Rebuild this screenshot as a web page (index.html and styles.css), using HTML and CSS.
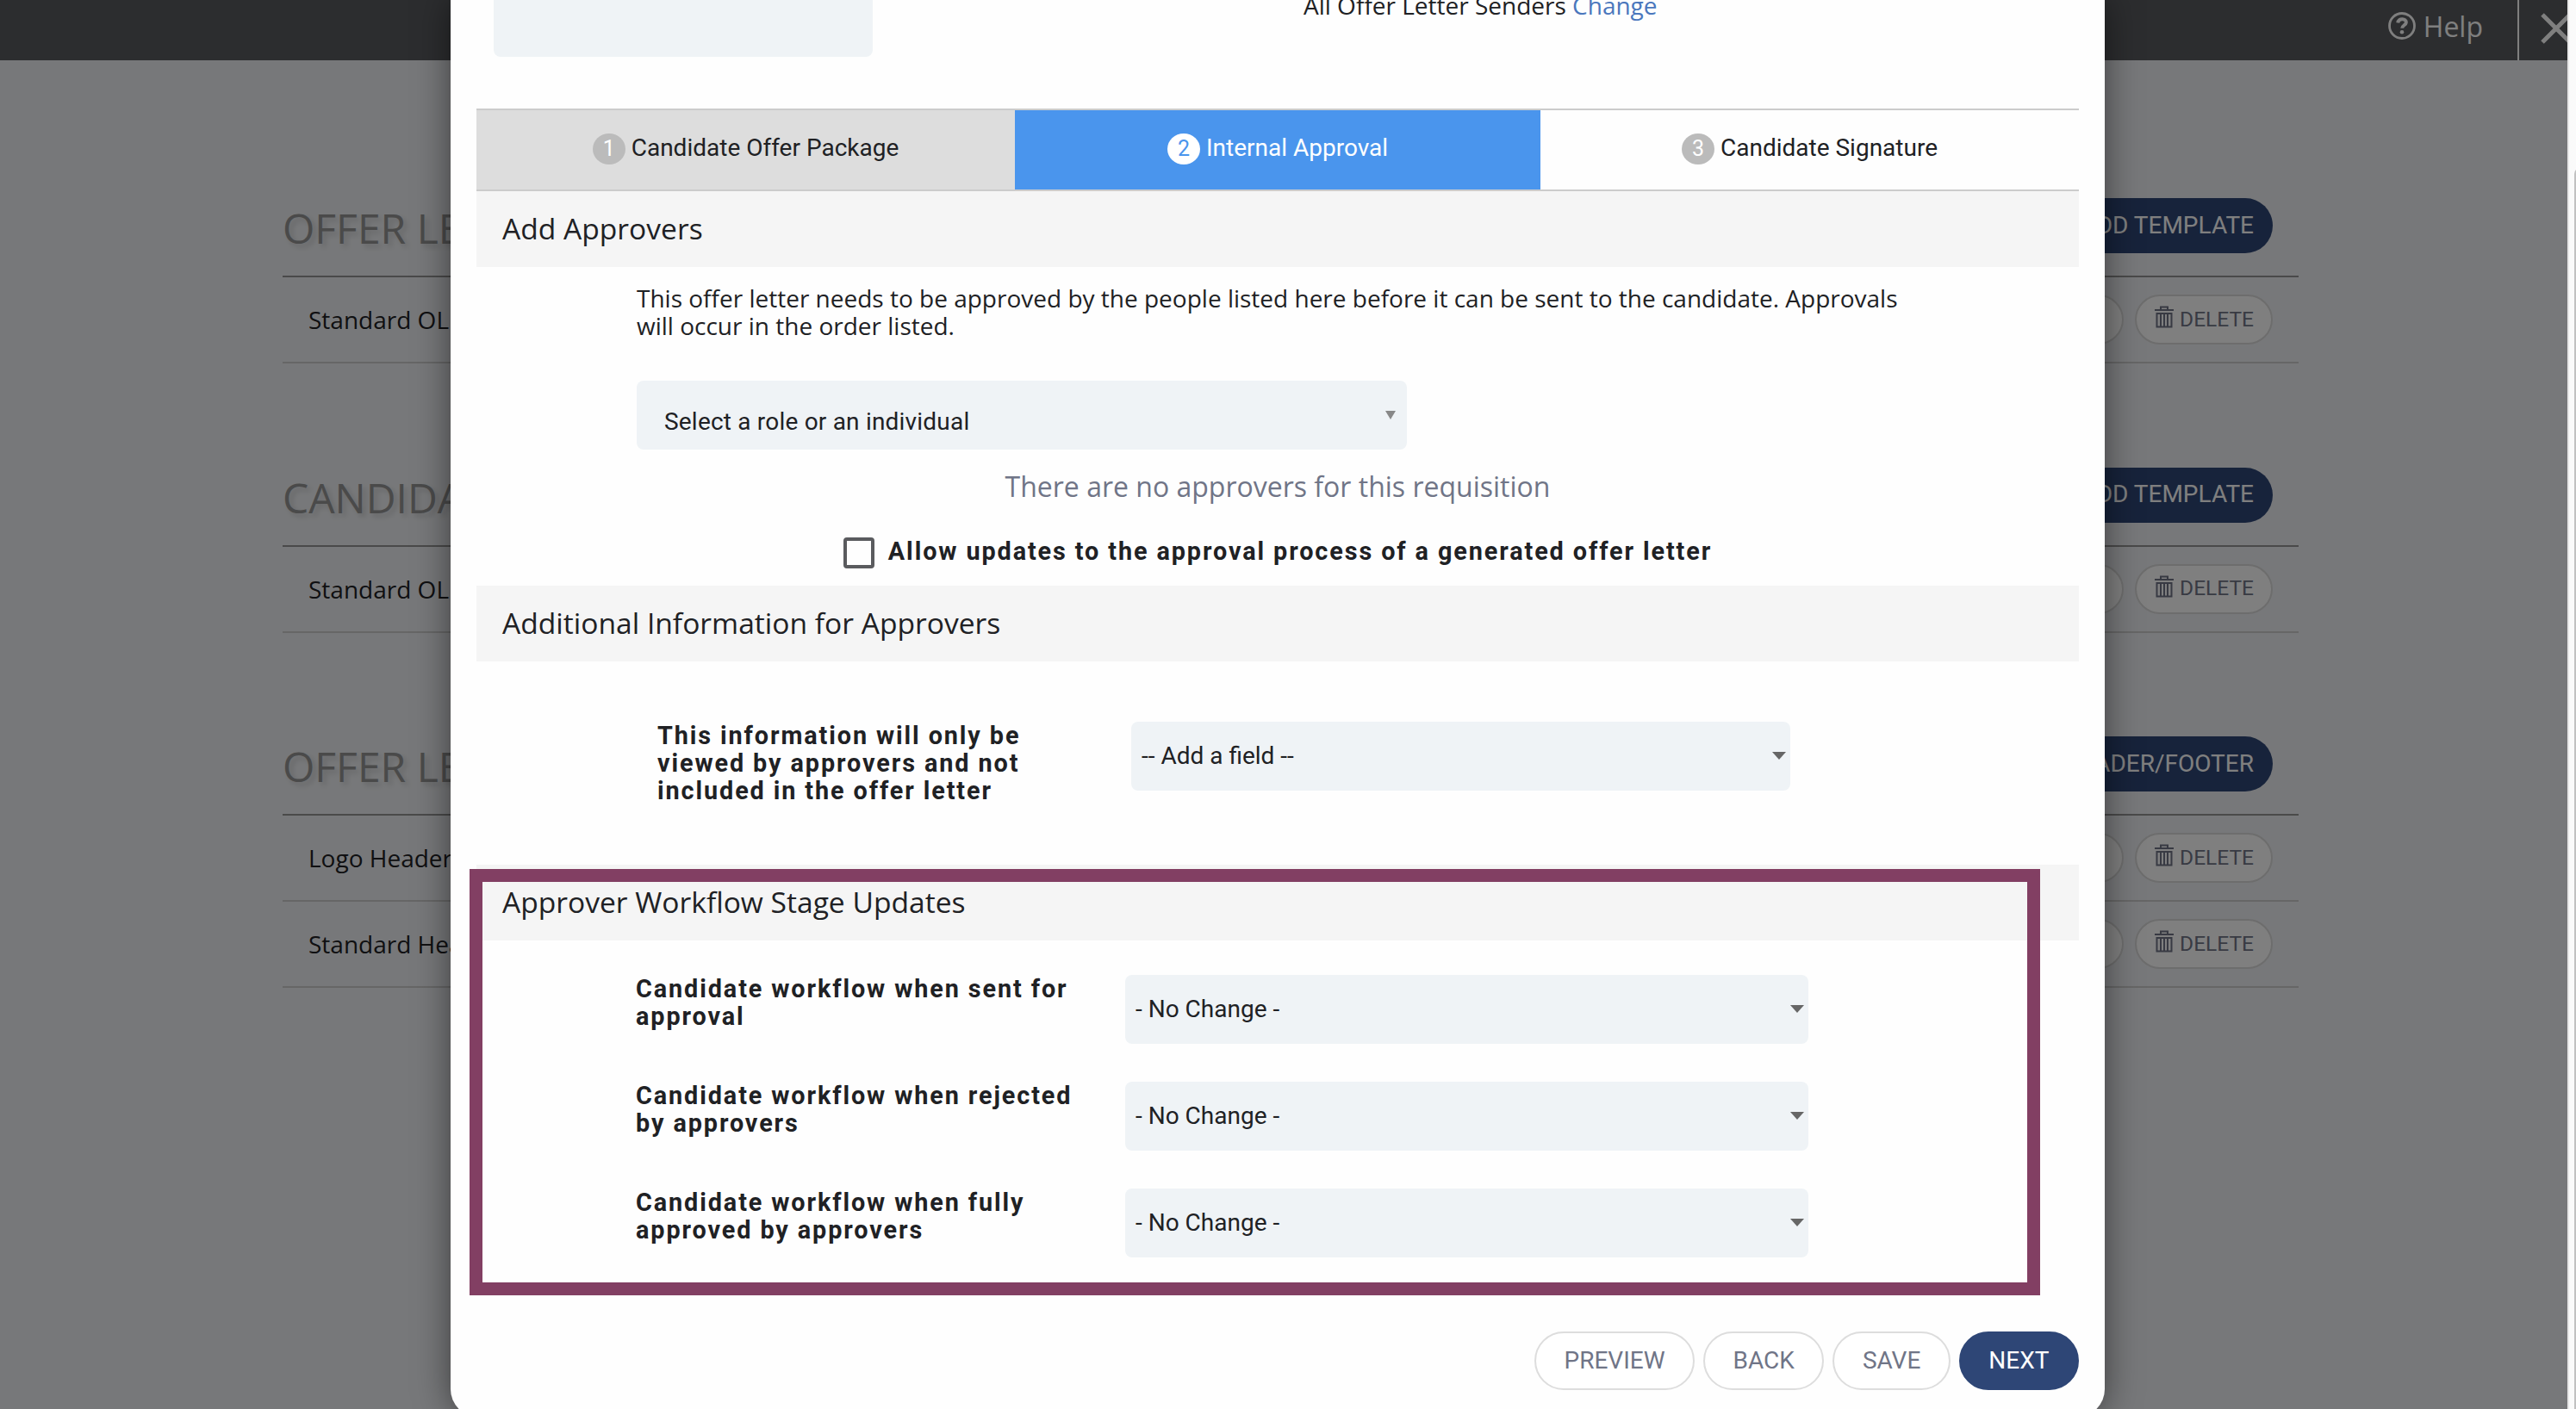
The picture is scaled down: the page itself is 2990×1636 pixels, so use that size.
FILE: index.html
```
<!DOCTYPE html>
<html lang="en">
<head>
    <meta charset="UTF-8">
    <meta name="viewport" content="width=device-width, initial-scale=1.0">
    <title>Offer Letter Templates</title>
    <link rel="stylesheet" href="styles.css">
</head>
<body>
    <svg class="sprite">
        <symbol id="icon-trash" viewBox="0 0 22 26">
            <path d="M0 5h22M7 4.500V1.500h8v3M2.500 9h17v15.500h-17zM7 9v15M11 9v15M15 9v15" fill="none" stroke="currentColor" stroke-width="2"/>
        </symbol>
    </svg>
    <div class="screen">
        <div class="page">
            <header class="topbar">
                <div class="help">
                    <svg class="help-icon" viewBox="0 0 32 32" fill="none" stroke="currentColor">
                        <circle cx="16" cy="16" r="14.500" stroke-width="2.800"/>
                        <path d="M11.300 12.500c.5-6 10-5.500 9.500-.3-.3 3-4.600 3.200-4.600 6.600" stroke-width="4"/>
                        <circle cx="16" cy="23.300" r="2.300" fill="currentColor" stroke="none"/>
                    </svg>
                    <span>Help</span>
                </div>
                <div class="close">
                    <svg class="close-icon" viewBox="0 0 36 36"><path d="M2 2l32 32M34 2L2 34" stroke="currentColor" stroke-width="5"/></svg>
                </div>
            </header>
            <main class="content">
                <section class="group">
                    <div class="group-head">
                        <h1>OFFER LETTERS</h1>
                        <button class="add">ADD TEMPLATE</button>
                    </div>
                    <div class="item">
                        <span>Standard OL</span>
                        <button class="small">EDIT</button>
                        <button class="small"><svg class="trash"><use href="#icon-trash"/></svg>DELETE</button>
                    </div>
                </section>
                <section class="group">
                    <div class="group-head">
                        <h1>CANDIDATE</h1>
                        <button class="add">ADD TEMPLATE</button>
                    </div>
                    <div class="item">
                        <span>Standard OL</span>
                        <button class="small">EDIT</button>
                        <button class="small"><svg class="trash"><use href="#icon-trash"/></svg>DELETE</button>
                    </div>
                </section>
                <section class="group">
                    <div class="group-head">
                        <h1>OFFER LETTERS</h1>
                        <button class="add">ADD HEADER/FOOTER</button>
                    </div>
                    <div class="item">
                        <span>Logo Header</span>
                        <button class="small">EDIT</button>
                        <button class="small"><svg class="trash"><use href="#icon-trash"/></svg>DELETE</button>
                    </div>
                    <div class="item">
                        <span>Standard Header</span>
                        <button class="small">EDIT</button>
                        <button class="small"><svg class="trash"><use href="#icon-trash"/></svg>DELETE</button>
                    </div>
                </section>
            </main>
            <div class="backdrop"></div>
            <div class="modal">
                <div class="modal-top">
                    <div class="top-field"></div>
                    <p class="senders">All Offer Letter Senders <a>Change</a></p>
                </div>
                <nav class="tabs">
                    <div class="tab done"><span class="num">1</span>Candidate Offer Package</div>
                    <div class="tab active"><span class="num">2</span>Internal Approval</div>
                    <div class="tab"><span class="num">3</span>Candidate Signature</div>
                </nav>

                <h2 class="band">Add Approvers</h2>
                <div class="approvers">
                    <p class="intro">This offer letter needs to be approved by the people listed here before it can be sent to the candidate. Approvals will occur in the order listed.</p>
                    <div class="select role">Select a role or an individual<i class="arrow"></i></div>
                </div>
                <p class="empty">There are no approvers for this requisition</p>
                <label class="allow"><span class="box"></span>Allow updates to the approval process of a generated offer letter</label>

                <h2 class="band">Additional Information for Approvers</h2>
                <div class="row info">
                    <span class="label">This information will only be<br>viewed by approvers and not<br>included in the offer letter</span>
                    <div class="select">-- Add a field --<i class="arrow"></i></div>
                </div>

                <h2 class="band">Approver Workflow Stage Updates</h2>
                <div class="stages">
                    <div class="row">
                        <span class="label">Candidate workflow when sent for<br>approval</span>
                        <div class="select">- No Change -<i class="arrow"></i></div>
                    </div>
                    <div class="row">
                        <span class="label">Candidate workflow when rejected<br>by approvers</span>
                        <div class="select">- No Change -<i class="arrow"></i></div>
                    </div>
                    <div class="row">
                        <span class="label">Candidate workflow when fully<br>approved by approvers</span>
                        <div class="select">- No Change -<i class="arrow"></i></div>
                    </div>
                </div>

                <footer class="actions">
                    <button class="btn">PREVIEW</button>
                    <button class="btn">BACK</button>
                    <button class="btn">SAVE</button>
                    <button class="btn primary">NEXT</button>
                </footer>
                <div class="highlight"></div>
            </div>
        </div>
        <div class="scrollbar"><div class="thumb"></div></div>
    </div>
</body>
</html>
```
FILE: styles.css
```
* {
    box-sizing: border-box;
}
body {
    margin: 0;
    font-family: "Open Sans", sans-serif;
    font-size: 28px;
    color: #202124;
    overflow: hidden;
}
h1, h2, p {
    margin: 0;
    font-weight: 400;
}
button {
    font-family: Roboto, sans-serif;
    white-space: nowrap;
}
.sprite {
    display: none;
}
.screen {
    display: flex;
    height: 1636px;
}
.page {
    position: relative;
    width: 2980px;
    height: 1636px;
    background: #eff1f4;
    overflow: hidden;
}
.scrollbar {
    width: 10px;
    padding: 195px 0 0 6px;
    background: #fafafa;
    border-left: 2px solid #e7e7e7;
    overflow: hidden;
}
.thumb {
    width: 14px;
    height: 1500px;
    border-radius: 7px;
    background: #c1c1c1;
}

/* page behind the dialog */
.topbar {
    display: flex;
    justify-content: flex-end;
    height: 70px;
    background: #585a5e;
    color: #fff;
}
.help {
    display: flex;
    align-items: center;
    gap: 9px;
    padding: 0 40px 10px 0;
    font-size: 32px;
}
.help-icon {
    width: 32px;
    height: 32px;
}
.close {
    width: 58px;
    padding: 15px 0 0 25px;
    border-left: 2px solid #fff;
}
.close-icon {
    display: block;
    width: 36px;
    height: 36px;
}
.content {
    padding: 137px 312px 0 328px;
}
.group {
    margin-bottom: 97.5px;
}
.group-head {
    display: flex;
    justify-content: space-between;
    height: 115px;
    padding: 23px 30px 0 0;
    border-bottom: 2px solid #949494;
}
.group-head h1 {
    font-size: 48px;
    line-height: 70px;
    color: #949494;
    text-shadow: 4px 4px 6px rgba(0, 0, 0, 0.15);
}
.add {
    height: 64px;
    padding: 0 22px 2px;
    border: none;
    border-radius: 32px;
    background: #2e4676;
    color: #fff;
    font-size: 28px;
}
.item {
    display: flex;
    align-items: center;
    gap: 13px;
    height: 100px;
    padding: 0 30px 0 30px;
    border-bottom: 2px solid #ccc;
}
.item span {
    flex: 1;
}
.small {
    display: flex;
    align-items: center;
    height: 58px;
    padding: 0 20px 2px 21.5px;
    border: 2px solid #dadada;
    border-radius: 29px;
    background: #fff;
    color: #707587;
    font-size: 24.5px;
}
.trash {
    width: 22px;
    height: 26px;
    margin: 0 7px 4px 0;
}

/* dialog */
.backdrop {
    position: absolute;
    inset: 0;
    background: rgba(0, 0, 0, 0.5);
}
.modal {
    position: absolute;
    top: 0;
    left: 523px;
    width: 1920px;
    height: 1645px;
    padding: 0 30px;
    background: #fefefe;
    border-radius: 0 0 32px 32px;
    box-shadow: 0 0 40px rgba(0, 0, 0, 0.5);
}
.modal-top {
    display: flex;
    height: 126px;
    padding-left: 20px;
}
.top-field {
    width: 440px;
    height: 66px;
    margin-right: 500px;
    border-radius: 0 0 8px 8px;
    background: #eff3f6;
}
.senders {
    margin-top: -13px;
    line-height: 38px;
}
.senders a {
    color: #4a77bd;
}
.tabs {
    display: flex;
    height: 96px;
    border-top: 2px solid #ccc;
    border-bottom: 2px solid #ccc;
    font-family: Roboto, sans-serif;
}
.tab {
    display: flex;
    align-items: center;
    justify-content: center;
    gap: 7px;
    width: 625px;
    padding-bottom: 6px;
}
.tab.done {
    background: #ddd;
}
.tab.active {
    width: 610px;
    background: #4a95ed;
    color: #fff;
}
.num {
    width: 38px;
    height: 36px;
    margin-top: 4px;
    border-radius: 50%;
    background: #bbb;
    color: #fff;
    font-size: 25px;
    line-height: 36px;
    text-align: center;
}
.active .num {
    background: #fff;
    color: #4a95ed;
}
.band {
    height: 88px;
    padding-left: 30px;
    background: #f5f5f5;
    font-size: 33.6px;
    line-height: 86px;
}
.approvers {
    padding: 20px 186px 0;
}
.intro {
    height: 112px;
    line-height: 32px;
}
.select {
    display: flex;
    align-items: center;
    justify-content: space-between;
    height: 80px;
    padding: 0 5px 2px 12px;
    border-radius: 8px;
    background: #eff3f6;
    font-family: Roboto, sans-serif;
}
.role {
    width: 894px;
    padding: 14px 13px 0 32px;
    letter-spacing: 0.2px;
}
.arrow {
    border: 8px solid transparent;
    border-top: 9px solid #666;
    border-bottom: 0;
}
.role .arrow {
    margin-bottom: 14px;
    border-width: 10px 6.500px 0;
    border-top-color: #888;
}
.empty {
    height: 102px;
    padding-top: 21px;
    font-size: 32px;
    line-height: 44px;
    text-align: center;
    color: #707587;
}
.allow {
    display: flex;
    justify-content: center;
    gap: 16px;
    height: 56px;
    font: 700 28.8px/33px Roboto, sans-serif;
    letter-spacing: 1.9px;
}
.box {
    width: 36px;
    height: 36px;
    border: 4px solid #5a5b5e;
    border-radius: 4px;
}
.row {
    display: flex;
    align-items: flex-start;
}
.label {
    width: 568px;
    margin: 0 0 0 -1px;
    font: 700 28.8px/32px Roboto, sans-serif;
    letter-spacing: 1.9px;
}
.row .select {
    width: 793px;
}
.info {
    height: 236px;
    padding: 70px 0 0 211px;
}
.info .label {
    width: 550px;
}
.info .select {
    width: 765px;
}
.stages {
    height: 454px;
    padding: 40px 0 0 186px;
}
.stages .row {
    height: 124px;
}
.actions {
    display: flex;
    justify-content: flex-end;
    gap: 10px;
}
.btn {
    height: 68px;
    padding: 0 32.5px 2px;
    border: 2px solid #ddd;
    border-radius: 34px;
    background: #fff;
    color: #707587;
    font-size: 28px;
}
.btn.primary {
    border-color: #2e4676;
    background: #2e4676;
    color: #fff;
}
.highlight {
    position: absolute;
    top: 1008.5px;
    left: 22.4px;
    width: 1823px;
    height: 495px;
    border: 15px solid #823f63;
}
```
